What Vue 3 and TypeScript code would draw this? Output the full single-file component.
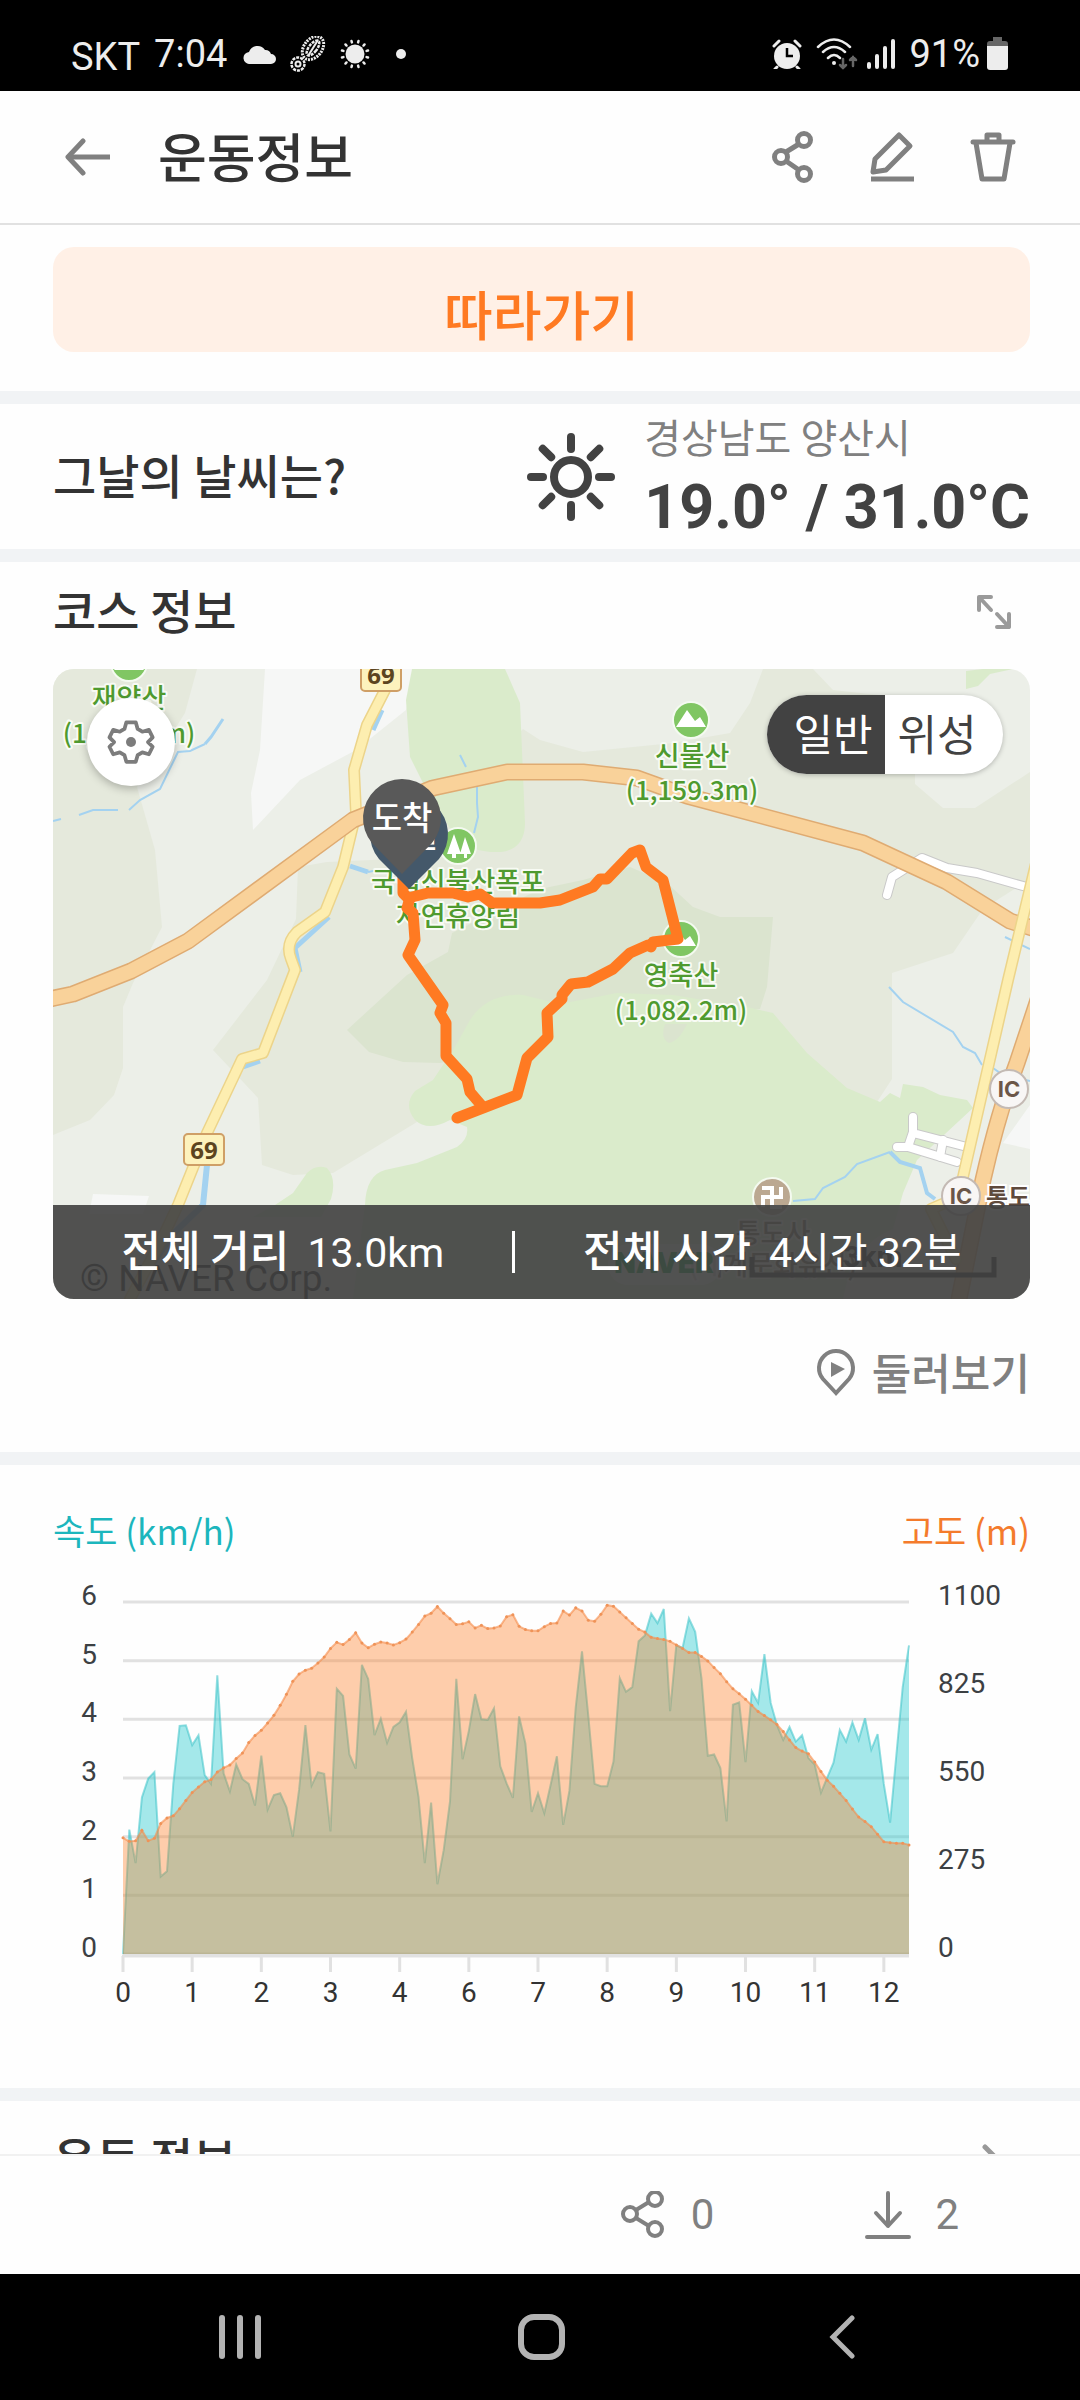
<script setup lang="ts">
import { computed, ref } from 'vue'

const mapType = ref<'normal' | 'satellite'>('normal')

// Speed samples in km/h
const speed: number[] = [
  0, 2.12, 1.55, 2.67, 2.99, 3.1, 1.32, 1.41, 2.9, 3.89, 3.9, 3.56, 3.73, 3.05, 2.9, 4.75, 3.08, 2.77, 3.23, 2.98, 2.9,
  2.53, 3.38, 2.46, 2.71, 2.74, 2.5, 2.0, 2.8, 3.9, 2.87, 3.1, 3.07, 2.09, 4.52, 4.4, 3.4, 3.16, 4.93, 4.69, 3.73, 4.01,
  3.6, 3.87, 3.95, 4.13, 3.34, 2.68, 1.55, 2.58, 1.19, 1.77, 2.6, 4.69, 3.32, 3.8, 4.43, 4.0, 3.99, 4.19, 3.2, 2.91, 2.66,
  4.05, 3.59, 2.42, 2.74, 2.4, 2.88, 3.37, 2.2, 2.78, 4.2, 5.16, 4.06, 2.9, 2.86, 2.86, 3.28, 4.7, 4.47, 4.55, 5.33, 5.43,
  5.8, 5.64, 5.88, 4.14, 5.26, 5.22, 5.72, 5.49, 4.7, 3.38, 3.4, 3.17, 2.26, 4.25, 4.29, 3.27, 4.48, 4.28, 5.11, 4.28,
  3.9, 3.65, 3.87, 3.62, 3.73, 3.34, 3.23, 2.75, 3.01, 3.26, 3.82, 3.62, 3.95, 3.65, 4.02, 3.48, 3.75, 2.9, 2.24, 3.4,
  4.55, 5.26,
]

// Altitude samples in metres
const altitude: number[] = [
  363, 352, 354, 387, 354, 362, 408, 425, 432, 454, 480, 505, 522, 538, 545, 569, 582, 591, 611, 628, 661, 683, 699, 722,
  746, 777, 812, 852, 875, 887, 893, 909, 928, 955, 974, 967, 983, 1004, 972, 957, 968, 975, 972, 966, 973, 984, 1006,
  1030, 1056, 1065, 1086, 1065, 1048, 1030, 1032, 1038, 1019, 1027, 1017, 1019, 1025, 1054, 1060, 1024, 1014, 1010, 1010,
  1023, 1033, 1034, 1072, 1059, 1082, 1072, 1043, 1040, 1062, 1090, 1087, 1069, 1051, 1033, 1015, 1006, 990, 986, 983,
  977, 966, 955, 942, 942, 930, 916, 895, 876, 851, 829, 813, 796, 777, 758, 745, 732, 717, 695, 669, 645, 634, 626, 600,
  570, 543, 524, 502, 480, 453, 428, 414, 398, 374, 351, 348, 346, 346, 341,
]

const plot = { left: 70, right: 856, top: 22, bottom: 374 }
const stepX = (plot.right - plot.left) / (speed.length - 1)
const height = plot.bottom - plot.top

function toPoints(values: number[], max: number) {
  return values.map((v, i) => ({ x: plot.left + i * stepX, y: plot.bottom - (v / max) * height }))
}
function toPath(points: { x: number; y: number }[]) {
  return points.map((p, i) => `${i ? 'L' : 'M'}${p.x.toFixed(1)} ${p.y.toFixed(1)}`).join(' ')
}
const close = ` L${plot.right} ${plot.bottom} L${plot.left} ${plot.bottom} Z`

const altitudePoints = computed(() => toPoints(altitude, 1100))
const speedPath = computed(() => toPath(toPoints(speed, 6)))
const altitudePath = computed(() => toPath(altitudePoints.value))

const speedTicks = [6, 5, 4, 3, 2, 1, 0].map((v, i) => ({ v, y: plot.top + (i * height) / 6 }))
const altitudeTicks = [1100, 825, 550, 275, 0].map((v, i) => ({ v, y: plot.top + (i * height) / 4 }))
const distanceTicks = [0, 1, 2, 3, 4, 6, 7, 8, 9, 10, 11, 12].map((v, i) => ({ v, x: plot.left + i * 11 * stepX }))
</script>

<template>
  <div class="screen">
    <div class="status">
      <span class="carrier">SKT</span>
      <span class="clock">7:04</span>
      <svg class="st-cloud" width="34" height="20" viewBox="0 0 34 20"><path d="M7 20a6 6 0 0 1-1-12A9 9 0 0 1 22 6a6 6 0 0 1 6 4 5 5 0 0 1 0 10z" fill="#ededed" /></svg>
      <svg class="st-foot" width="36" height="36" viewBox="0 0 36 36" fill="none" stroke="#ededed">
        <ellipse cx="23" cy="12" rx="9" ry="13" transform="rotate(38 23 12)" stroke-width="3" stroke-dasharray="2 1" />
        <ellipse cx="23" cy="12" rx="4" ry="9" transform="rotate(38 23 12)" stroke-width="2.5" stroke-dasharray="3 1" />
        <path d="M28 4L18 20" stroke-width="2" />
        <circle cx="8" cy="28" r="6.500" stroke-width="2.500" stroke-dasharray="3 1" />
        <circle cx="8" cy="28" r="2.500" stroke-width="2" />
      </svg>
      <svg class="st-sun" width="30" height="30" viewBox="0 0 30 30">
        <circle cx="15" cy="15" r="9.500" fill="#ededed" />
        <g stroke="#ededed" stroke-width="2.500" stroke-linecap="round">
          <path v-for="n in 12" :key="n" d="M15 1.500V3" :transform="`rotate(${n * 30 - 15} 15 15)`" />
        </g>
      </svg>
      <span class="st-dot"></span>
      <span class="grow"></span>
      <svg width="30" height="30" viewBox="0 0 30 30">
        <circle cx="15" cy="17" r="13" fill="#ededed" />
        <path d="M2 7L7 2M28 7L23 2M5 28l-2 2M25 28l2 2" stroke="#ededed" stroke-width="3" stroke-linecap="round" />
        <path d="M15 9v8h6" fill="none" stroke="#000" stroke-width="2.500" />
      </svg>
      <svg class="st-wifi" width="42" height="32" viewBox="0 0 42 32" fill="none" stroke-linecap="round">
        <g stroke="#ededed" stroke-width="2.500">
          <path d="M2 9Q18-6 34 9M7 14Q18 4 29 14M12 20Q18 14 24 20" />
        </g>
        <circle cx="18" cy="25" r="2" fill="#ededed" />
        <path d="M27 21v9M24 27l3 3 3-3M37 28v-9M34 22l3-3 3 3" stroke="#666" stroke-width="2.500" />
      </svg>
      <svg class="st-signal" width="28" height="30" viewBox="0 0 28 30" fill="#ededed">
        <rect x="0" y="23" width="4" height="7" rx="2" /><rect x="8" y="15" width="4" height="15" rx="2" />
        <rect x="16" y="7" width="4" height="23" rx="2" /><rect x="24" y="0" width="4" height="30" rx="2" />
      </svg>
      <span class="percent">91%</span>
      <svg class="st-battery" width="21" height="33" viewBox="0 0 21 33">
        <path d="M6 0h9v4h3a3 3 0 0 1 3 3v3H0V7a3 3 0 0 1 3-3h3z" fill="#666" />
        <path d="M0 9h21v21a3 3 0 0 1-3 3H3a3 3 0 0 1-3-3z" fill="#ededed" />
      </svg>
    </div>

    <header class="appbar">
      <button class="icon-btn" type="button" aria-label="뒤로">
        <svg width="46" height="38" viewBox="0 0 46 38" fill="none" stroke="#808080" stroke-width="5" stroke-linejoin="round">
          <path d="M46 19H4" /><path d="M19 3L4 19l15 16" stroke-linecap="round" />
        </svg>
      </button>
      <h1>운동정보</h1>
      <span class="grow"></span>
      <button class="icon-btn" type="button" aria-label="공유">
        <svg width="42" height="52" viewBox="0 0 42 52" fill="none" stroke="#808080" stroke-width="5">
          <path d="M14 21L27 13M14 30L27 39" />
          <circle cx="9" cy="26" r="6.500" /><circle cx="32" cy="9" r="6.500" /><circle cx="32" cy="43" r="6.500" />
        </svg>
      </button>
      <button class="icon-btn" type="button" aria-label="수정">
        <svg width="44" height="52" viewBox="0 0 44 52" fill="none" stroke="#808080" stroke-width="5" stroke-linejoin="round">
          <path d="M29 4L40 15 16 39 3 41 5 28z" /><path d="M1 48h43" />
        </svg>
      </button>
      <button class="icon-btn" type="button" aria-label="삭제">
        <svg width="46" height="52" viewBox="0 0 46 52" fill="none" stroke="#808080" stroke-width="5" stroke-linejoin="round">
          <path d="M3 11h40" stroke-linecap="round" /><path d="M17 10V4h12v6M6 12l6 36h22l6-36" />
        </svg>
      </button>
    </header>

    <main class="content">
      <section class="follow">
        <button class="follow-btn" type="button">따라가기</button>
      </section>

      <section class="weather">
        <h2>그날의 날씨는?</h2>
        <div class="weather-info">
          <svg width="90" height="90" viewBox="0 0 90 90" fill="none" stroke="#424242">
            <circle cx="45" cy="45" r="17" stroke-width="8" />
            <g stroke-width="8" stroke-linecap="round">
              <path v-for="n in 8" :key="n" d="M45 5V17" :transform="`rotate(${n * 45} 45 45)`" />
            </g>
          </svg>
          <div class="weather-text">
            <p class="place">경상남도 양산시</p>
            <p class="temp">19.0° / 31.0°C</p>
          </div>
        </div>
      </section>

      <section class="course">
        <div class="section-head">
          <h2>코스 정보</h2>
          <button class="icon-btn" type="button" aria-label="지도 확대">
            <svg width="36" height="36" viewBox="0 0 36 36" fill="none" stroke="#9a9a9a" stroke-width="4" stroke-linecap="round" stroke-linejoin="round">
              <path d="M3 16V3h12M3 3l12 13M33 20v13H21M33 33L21 20" />
            </svg>
          </button>
        </div>

        <div class="map">
          <svg class="map-canvas" viewBox="0 0 977 630" preserveAspectRatio="xMidYMid slice">
            <rect width="977" height="630" fill="#eceFe8" />
            <path fill="#e5e9dc" d="M0 0H144L132 44 100 95 84 118 102 181 109 258 80 314 70 338V399L61 426 37 451 0 466z" />
            <path fill="#f6f7f6" d="M212 0L207 81 198 124 200 161 247 111 303 81 353 41 360 0z" />
            <path fill="#e5e9dc" d="M245 198L274 193 340 190 470 60 487 71 530 83 620 74 677 64 697 34 710 0H760L780 21 862 30V115L890 139H922L977 103V210L930 240 900 284 839 304V410L824 433 500 400 364 453 280 504 240 506 209 496 205 429 160 381 214 311 243 250z" />
            <path fill="#dbe4cf" d="M294 361L316 383 350 393 387 394 460 380 600 340H707L714 318 720 248H667L640 238 614 214 577 198 530 211 487 220 399 264 395 283 354 306z" />
            <path fill="#daebcb" d="M359 0H452L467 34 472 154Q472 180 448 183 420 184 404 171L370 114 357 88 353 31z" />
            <path fill="#daebcb" d="M402 378L417 351Q434 324 470 326L507 335 564 324 620 326 694 338 720 344 754 384 794 419 827 433 837 424 847 429 850 415 870 418 887 426 914 431 920 439 864 491 850 524 840 560Q800 575 790 630H300L312 536Q313 506 332 501L364 494 404 478Q416 470 414 458L397 451Q375 463 362 451 350 436 362 422L380 411z" />
            <path fill="#dbe4cf" d="M612 355Q607 370 616 374 626 372 634 355z" />
            <path fill="#daebcb" d="M222 536L240 524 254 504Q263 495 274 499 284 510 278 530L268 548H200z" />
            <path fill="#daebcb" d="M913 2V20L925 17 937 5 960 0H930z" />
            <path fill="#f6f7f6" d="M977 436L950 474 977 480zM40 525L96 527 90 545H36z" />

            <g class="river">
              <path stroke-width="3" d="M170 50L158 68 152 75" />
              <path stroke-width="2" d="M152 75L137 82 125 83 107 120 87 131 76 141M65 141H40L26 146M8 150L0 152" />
              <path stroke-width="5" d="M329 41L320 61M297 197L315 203M276 248L242 279 247 303M190 398L207 392" />
              <path stroke-width="2" d="M315 203L330 200M407 86L413 98M424 118V134L425 148 421 164" />
              <path stroke-width="6" d="M154 496L150 536 120 565 96 600" />
              <path stroke-width="2" d="M836 318L850 333 900 363 910 378 922 384 929 396M940 399L950 406 977 412M952 268L977 280M740 532L762 530 770 519 792 508 804 495 837 483" />
              <path stroke-width="4" d="M837 483L847 493 867 499 874 524 882 530" />
            </g>

            <g fill="none" stroke-linecap="round" stroke-linejoin="round">
              <g stroke="#c9c9c9" stroke-width="10">
                <path d="M834 226L839 208 869 189 894 199 924 204 977 219" />
                <path d="M860 448V463L855 478H844M860 464L914 478M855 478L904 493M890 471L887 488" />
              </g>
              <g stroke="#fff" stroke-width="8">
                <path d="M834 226L839 208 869 189 894 199 924 204 977 219" />
                <path d="M860 448V463L855 478H844M860 464L914 478M855 478L904 493M890 471L887 488" />
              </g>
              <g stroke="#ecd48a" stroke-width="12">
                <path d="M332 21L314 56 301 101 303 144 290 198 272 243 244 263Q232 275 238 290L242 301 210 384 189 390 154 464 125 536 107 574 77 630" />
              </g>
              <g stroke="#fdeeb0" stroke-width="9">
                <path d="M332 21L314 56 301 101 303 144 290 198 272 243 244 263Q232 275 238 290L242 301 210 384 189 390 154 464 125 536 107 574 77 630" />
              </g>
              <g stroke="#dfab72" stroke-width="17">
                <path d="M-8 331L20 325 78 302 135 272 300 151 380 119 454 103H530L584 109 634 127 810 174 894 213 957 252 985 261" />
                <path d="M990 316L964 394Q945 445 930 511L904 640" />
              </g>
              <g stroke="#f9d29a" stroke-width="14">
                <path d="M-8 331L20 325 78 302 135 272 300 151 380 119 454 103H530L584 109 634 127 810 174 894 213 957 252 985 261" />
                <path d="M990 316L964 394Q945 445 930 511L904 640" />
              </g>
              <path stroke="#ecd48a" stroke-width="12" d="M984 190L955 311 910 508M908 527L878 540 903 590" />
              <path stroke="#fdeeb0" stroke-width="9" d="M984 190L955 311 910 508 908 527 878 540 903 590" />
            </g>

            <g class="shield">
              <rect x="308" y="-9" width="40" height="31" rx="4" /><text x="328" y="15">69</text>
              <rect x="131" y="465" width="40" height="31" rx="4" /><text x="151" y="490">69</text>
            </g>

            <g class="ic">
              <circle cx="956" cy="420" r="19" /><text x="956" y="428">IC</text>
              <circle cx="908" cy="527" r="19" /><text x="908" y="535">IC</text>
            </g>
            <text class="place-label" x="933" y="537">통도사</text>

            <g fill="#80c663" stroke="#f4faf0" stroke-width="2">
              <circle cx="76" cy="-6" r="18" /><circle cx="405" cy="177" r="18" />
              <circle cx="638" cy="51" r="18" /><circle cx="628" cy="270" r="18" />
              <circle cx="719" cy="528" r="19" fill="#bba891" />
            </g>
            <g fill="#fff">
              <path d="M394 185L401 165 408 185H403V189H399V185zM407 185L412 168 418 185H414V189H411V185z" />
              <path d="M623 58L634 41 642 52 647 48 653 58z" /><path d="M613 277L624 260 632 271 637 267 643 277z" />
              <path d="M61 1H91L84-9H68z" />
            </g>
            <path d="M709 519H719V538H729M710 538V528H728V518" fill="none" stroke="#fff" stroke-width="4" />

            <g class="peak">
              <text x="76" y="39">재약산</text><text class="elevation" x="76" y="74">(1,108.9m)</text>
              <text x="405" y="223">국립신불산폭포</text><text x="405" y="257">자연휴양림</text>
              <text x="639" y="97">신불산</text><text class="elevation" x="639" y="131">(1,159.3m)</text>
              <text x="628" y="316">영축산</text><text class="elevation" x="628" y="351">(1,082.2m)</text>
            </g>

            <g class="temple"><text x="720" y="574">통도사</text><text x="720" y="606">(세계문화유산)</text></g>
            <rect x="555" y="575" width="113" height="41" rx="20" fill="#fff" fill-opacity=".7" />
            <text class="naver" x="611" y="604">NAVER</text>
            <path d="M699 588V606H941V588" fill="none" stroke="#222" stroke-width="5" />
            <text class="scale" x="820" y="598">3km</text>
            <text class="copyright" x="27" y="622">© NAVER Corp.</text>

            <g fill="none" stroke="#ff7a22" stroke-width="11" stroke-linecap="round" stroke-linejoin="round">
              <path d="M350 205V224L355 229 375 224H400L415 228 427 225 439 234H487L507 231 540 218 547 210H554L579 184 587 181 593 198 610 211 625 270 600 273 598 278 595 276 577 284 560 300 535 313 518 315 509 326V330L494 344 495 368 474 389 464 426 404 449" />
              <path d="M429 437L417 423 414 410 393 387V354L387 344 390 336 355 286 362 271 360 244 354 239 357 229" />
            </g>

            <path d="M356 220L326 190A39 39 0 1 1 386 190z" fill="#44586a" />
            <text class="pin" x="356" y="178">출발</text>
            <path d="M349 205L319 174A39 39 0 1 1 379 174z" fill="#595959" />
            <text class="pin" x="349" y="161">도착</text>
          </svg>

          <button class="map-settings" type="button" aria-label="지도 설정">
            <svg width="48" height="48" viewBox="0 0 48 48" fill="none" stroke="#7c7c7c" stroke-width="4" stroke-linejoin="round">
              <path d="M19 3h10l2 7 5 3 7-2 4 8-5 5 5 5-4 8-7-2-5 3-2 7H19l-2-7-5-3-7 2-4-8 5-5-5-5 4-8 7 2 5-3z" transform="translate(1.500 1.500) scale(.94)" />
              <circle cx="24" cy="24" r="5" fill="#7c7c7c" stroke="none" />
            </svg>
          </button>
          <div class="map-type">
            <button type="button" :class="{ on: mapType === 'normal' }" :aria-pressed="mapType === 'normal'" @click="mapType = 'normal'">일반</button>
            <button type="button" :class="{ on: mapType === 'satellite' }" :aria-pressed="mapType === 'satellite'" @click="mapType = 'satellite'">위성</button>
          </div>
          <div class="summary">
            <p><b>전체 거리</b><span>13.0km</span></p>
            <i></i>
            <p><b>전체 시간</b><span>4시간 32분</span></p>
          </div>
        </div>

        <div class="explore-row">
          <button class="explore" type="button">
            <svg width="40" height="48" viewBox="0 0 40 48">
              <path d="M20 44L7 30A17 17 0 1 1 33 30z" fill="none" stroke="#808080" stroke-width="4" />
              <path d="M15 13L29 20 15 28z" fill="#808080" />
            </svg>
            <span>둘러보기</span>
          </button>
        </div>
      </section>

      <section class="graph">
        <div class="graph-head"><span class="speed">속도 (km/h)</span><span class="altitude">고도 (m)</span></div>
        <svg class="chart" viewBox="0 0 977 440" role="img" aria-label="속도와 고도 그래프">
          <g stroke="#e1e1e1" stroke-width="3">
            <path v-for="t in speedTicks" :key="t.v" :d="`M${plot.left} ${t.y}H${plot.right}`" />
            <path :d="`M${plot.left - 1} 376H${plot.right}`" />
            <path v-for="t in distanceTicks" :key="t.v" :d="`M${t.x} 376V392`" />
          </g>
          <path :d="speedPath + close" fill="rgba(30,200,205,.4)" />
          <path :d="speedPath" fill="none" stroke="rgba(60,195,200,.55)" stroke-width="2" />
          <path :d="altitudePath + close" fill="rgba(255,122,31,.37)" />
          <path :d="altitudePath" fill="none" stroke="rgba(245,140,75,.6)" stroke-width="2" />
          <circle v-for="(p, i) in altitudePoints" :key="i" :cx="p.x" :cy="p.y" r="1.500" fill="#ef9358" />
          <text v-for="t in speedTicks" :key="t.v" class="axis" x="44" :y="t.y + 3" text-anchor="end">{{ t.v }}</text>
          <text v-for="t in altitudeTicks" :key="t.v" class="axis" x="885" :y="t.y + 3">{{ t.v }}</text>
          <text v-for="t in distanceTicks" :key="t.v" class="axis distance" :x="t.x" y="422">{{ t.v }}</text>
        </svg>
      </section>

      <section class="exercise">
        <h2>운동 정보</h2>
        <svg width="20" height="34" viewBox="0 0 20 34" fill="none" stroke="#999" stroke-width="5" stroke-linecap="round"><path d="M3 4L16 17 3 30" /></svg>
      </section>
    </main>

    <footer class="counts">
      <button class="count" type="button" aria-label="공유">
        <svg width="46" height="48" viewBox="0 0 46 48" fill="none" stroke="#808080" stroke-width="4">
          <path d="M15 19L28 11M15 27L28 35" />
          <circle cx="9" cy="23" r="7" /><circle cx="34" cy="8" r="7" /><circle cx="34" cy="38" r="7" />
        </svg>
        <span>0</span>
      </button>
      <button class="count" type="button" aria-label="다운로드">
        <svg width="46" height="48" viewBox="0 0 46 48" fill="none" stroke="#808080" stroke-width="4" stroke-linecap="round" stroke-linejoin="round">
          <path d="M23 2V35M11 22L23 35 35 22M2 46H44" />
        </svg>
        <span>2</span>
      </button>
    </footer>

    <nav class="sysnav">
      <button type="button" aria-label="최근 앱">
        <svg width="42" height="44" viewBox="0 0 42 44" fill="#b3b3b3"><rect width="6" height="44" rx="3" /><rect x="18" width="6" height="44" rx="3" /><rect x="36" width="6" height="44" rx="3" /></svg>
      </button>
      <button type="button" aria-label="홈">
        <svg width="48" height="48" viewBox="0 0 48 48" fill="none" stroke="#b3b3b3" stroke-width="6"><rect x="4" y="4" width="41" height="40" rx="13" /></svg>
      </button>
      <button type="button" aria-label="뒤로">
        <svg width="26" height="44" viewBox="0 0 26 44" fill="none" stroke="#b3b3b3" stroke-width="5" stroke-linecap="round"><path d="M23 3L4 22 23 41" /></svg>
      </button>
    </nav>
  </div>
</template>

<style>
body {
  margin: 0;
  background: #fff;
}
</style>

<style scoped>
.screen {
  display: flex;
  flex-direction: column;
  height: 100vh;
  overflow: hidden;
  background: #fefefe;
  color: #333;
  font-family: "Noto Sans CJK KR", sans-serif;
}
svg {
  display: block;
  flex: none;
}
h1,
h2,
p {
  margin: 0;
}
button {
  padding: 0;
  border: 0;
  background: none;
  color: inherit;
  font: inherit;
}
.grow {
  flex: 1;
}
.status {
  display: flex;
  flex: none;
  align-items: center;
  height: 91px;
  padding: 16px 72px 0 71px;
  box-sizing: border-box;
  background: #000;
  color: #ededed;
  font: 38px/44px Roboto, sans-serif;
}
.carrier {
  padding-top: 6px;
}
.clock {
  margin-left: 14px;
}
.st-cloud {
  margin-left: 16px;
}
.st-foot {
  margin-left: 13px;
}
.st-sun {
  margin-left: 14px;
}
.st-dot {
  width: 10px;
  height: 10px;
  margin-left: 26px;
  border-radius: 50%;
  background: #ededed;
}
.st-wifi {
  margin-left: 14px;
}
.st-signal {
  margin-left: 9px;
}
.percent {
  margin-left: 14px;
}
.st-battery {
  margin-left: 7px;
}
.appbar {
  display: flex;
  flex: none;
  align-items: center;
  gap: 56px;
  height: 132px;
  padding: 0 64px;
  border-bottom: 2px solid #e1e1e1;
}
h1 {
  margin-left: -8px;
  padding-bottom: 4px;
  font-size: 53px;
  line-height: 76px;
  font-weight: 500;
}
h2 {
  padding-bottom: 6px;
  font-size: 47px;
  line-height: 66px;
  font-weight: 500;
}
.content {
  flex: 1;
  min-height: 0;
  overflow-y: auto;
  scrollbar-width: none;
}
section {
  padding: 0 50px 0 53px;
  border-bottom: 13px solid #f1f3f5;
}
.follow {
  padding-top: 22px;
  padding-bottom: 39px;
}
.follow-btn {
  display: block;
  width: 100%;
  height: 105px;
  padding-top: 26px;
  border-radius: 21px;
  background: #fff0e6;
  color: #ff7a22;
  font-size: 53px;
  line-height: 74px;
  font-weight: 500;
}
.weather {
  display: flex;
  align-items: center;
  justify-content: space-between;
  height: 145px;
}
.weather-info {
  display: flex;
  align-items: center;
  gap: 28px;
}
.weather-text {
  padding-bottom: 6px;
}
.place {
  margin-bottom: 6px;
  color: #808080;
  font-size: 40px;
  line-height: 60px;
}
.temp {
  color: #424242;
  font: bold 61px/70px Roboto, sans-serif;
}
.section-head {
  display: flex;
  align-items: center;
  justify-content: space-between;
  height: 100px;
  padding: 0 18px 7px 0;
}
.map {
  position: relative;
  height: 630px;
  overflow: hidden;
  border-radius: 21px;
}
.map-canvas {
  width: 100%;
  height: 100%;
}
.river {
  fill: none;
  stroke: #a4d2f0;
}
.shield rect {
  fill: #fdf2bd;
  stroke: #cf9f66;
  stroke-width: 2px;
}
.shield text {
  fill: #5c4420;
  font: bold 24px "Noto Sans", sans-serif;
  text-anchor: middle;
}
.ic circle {
  fill: #f8f6f5;
  stroke: #c4bab4;
  stroke-width: 2px;
}
.ic text {
  fill: #6b5648;
  font: bold 22px Inter, sans-serif;
  text-anchor: middle;
}
.place-label {
  fill: #5f4a3c;
  font-size: 24px;
  font-weight: 700;
  stroke: #fff;
  stroke-width: 4px;
  paint-order: stroke;
}
.peak text,
.temple text {
  fill: #4f9a2f;
  font-size: 27px;
  font-weight: 500;
  text-anchor: middle;
  stroke: #f8fbf4;
  stroke-width: 4px;
  stroke-linejoin: round;
  paint-order: stroke;
}
.peak .elevation {
  font-size: 26px;
}
.temple text {
  fill: #7a6552;
}
.naver {
  fill: #03a63c;
  font: 900 28px Inter, sans-serif;
  text-anchor: middle;
}
.scale {
  fill: #222;
  font: bold 30px Roboto, sans-serif;
  text-anchor: middle;
}
.copyright {
  fill: #111;
  font: 37px Roboto, sans-serif;
}
.pin {
  fill: #fff;
  font-size: 33px;
  font-weight: 500;
  text-anchor: middle;
}
.map-settings {
  position: absolute;
  top: 29px;
  left: 34px;
  display: grid;
  place-items: center;
  width: 88px;
  height: 88px;
  border-radius: 50%;
  background: #fff;
  box-shadow: 0 3px 9px rgba(0, 0, 0, 0.25);
}
.map-type {
  position: absolute;
  top: 26px;
  right: 27px;
  display: flex;
  overflow: hidden;
  width: 236px;
  height: 79px;
  border-radius: 40px;
  background: #fff;
  box-shadow: 0 1px 5px rgba(0, 0, 0, 0.25);
}
.map-type button {
  flex: 1;
  padding-bottom: 4px;
  color: #424242;
  font-size: 43px;
  line-height: 75px;
}
.map-type button:first-child {
  padding-left: 14px;
}
.map-type button:last-child {
  padding-right: 14px;
}
.map-type .on {
  background: #424242;
  color: #fff;
}
.summary {
  position: absolute;
  right: 0;
  bottom: 0;
  left: 0;
  display: flex;
  align-items: center;
  justify-content: center;
  gap: 68px;
  height: 94px;
  background: rgba(66, 66, 66, 0.915);
  color: #fff;
  font-size: 43px;
  line-height: 60px;
}
.summary p {
  display: flex;
  align-items: baseline;
  gap: 18px;
  padding-bottom: 4px;
}
.summary b {
  font-weight: 500;
}
.summary span {
  font-family: Roboto, "Noto Sans CJK KR", sans-serif;
  font-size: 41px;
}
.summary i {
  width: 3px;
  height: 42px;
  background: #fff;
}
.explore-row {
  display: flex;
  align-items: center;
  justify-content: flex-end;
  height: 147px;
  padding-bottom: 6px;
}
.explore {
  display: flex;
  align-items: center;
  gap: 16px;
  color: #808080;
  font-size: 43px;
  line-height: 60px;
  font-weight: 500;
}
.explore span {
  padding-bottom: 4px;
}
.graph {
  padding-top: 19px;
  padding-bottom: 68px;
}
.graph-head {
  display: flex;
  align-items: center;
  justify-content: space-between;
  height: 90px;
  padding-bottom: 6px;
  font-size: 35px;
}
.speed {
  color: #1cb6bd;
}
.altitude {
  color: #f47b2c;
}
.chart {
  width: 100%;
}
.axis {
  fill: #3c4043;
  font: 28px Roboto, sans-serif;
}
.distance {
  fill: #333;
  text-anchor: middle;
}
.exercise {
  display: flex;
  align-items: center;
  justify-content: space-between;
  height: 118px;
  padding-right: 78px;
}
.counts {
  display: flex;
  flex: none;
  align-items: center;
  justify-content: flex-end;
  gap: 151px;
  height: 118px;
  padding-right: 121px;
  border-top: 2px solid #f1f1f1;
}
.count {
  display: flex;
  align-items: center;
  gap: 24px;
  color: #808080;
  font: 42px/52px Roboto, sans-serif;
}
.sysnav {
  display: grid;
  flex: none;
  grid-template-columns: repeat(3, 1fr);
  place-items: center;
  height: 126px;
  padding: 0 88px 0 90px;
  background: #000;
}
</style>
